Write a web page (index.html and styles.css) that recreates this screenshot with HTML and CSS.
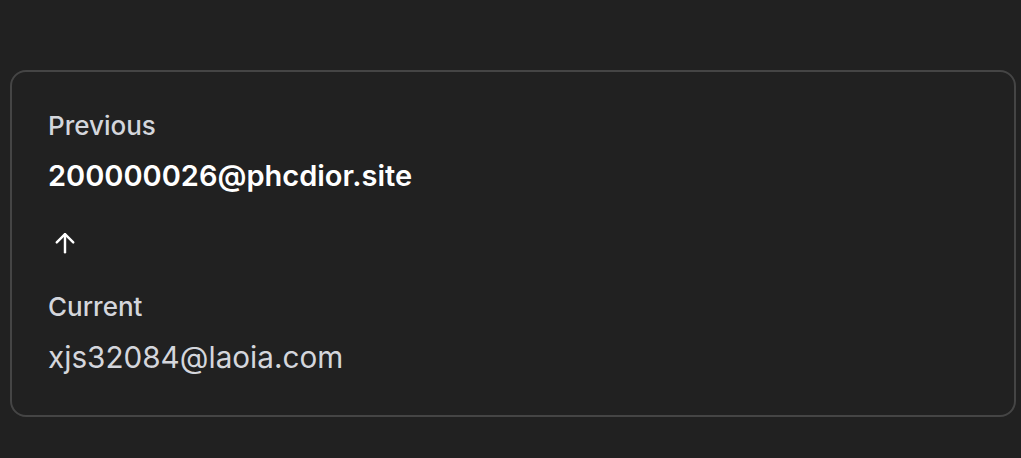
FILE: index.html
```html
<!DOCTYPE html>
<html lang="en">
<head>
  <meta charset="UTF-8">
  <meta name="viewport" content="width=device-width, initial-scale=1.0">
  <title>Email change</title>
  <link rel="stylesheet" href="styles.css">
</head>
<body>
  <div class="card">
    <div class="label">Previous</div>
    <div class="email old">200000026@phcdior.site</div>

    <div class="arrow">
      <svg width="22" height="22" viewBox="0 0 20 20" fill="none" stroke="#fff" stroke-width="2.2" stroke-linecap="round" stroke-linejoin="round">
        <path d="M10 18.5V2"/>
        <path d="M2.5 9.5L10 2l7.5 7.5"/>
      </svg>
    </div>

    <div class="label">Current</div>
    <div class="email new">xjs32084@laoia.com</div>
  </div>
</body>
</html>
```

FILE: styles.css
```css
body {
  margin: 0;
  background-color: #212121;
  font-family: Inter, "Noto Sans", sans-serif;
}

.card {
  margin: 70px 5px 0 10px;
  border: 2px solid #454545;
  border-radius: 16px;
  padding: 38px 36px 40px 36px;
  display: flex;
  flex-direction: column;
}

.label {
  color: #d4d6dc;
  font-size: 26px;
  font-weight: 500;
  line-height: 32px;
}

.email {
  font-size: 29px;
  line-height: 36px;
  margin-top: 16px;
}

.old {
  color: #ffffff;
  font-weight: 600;
}

.new {
  color: #d4d6dc;
  font-size: 29.7px;
  font-weight: 400;
}

.arrow {
  margin: 38px 0 37px 6px;
  height: 22px;
}

.arrow svg {
  display: block;
}
```
